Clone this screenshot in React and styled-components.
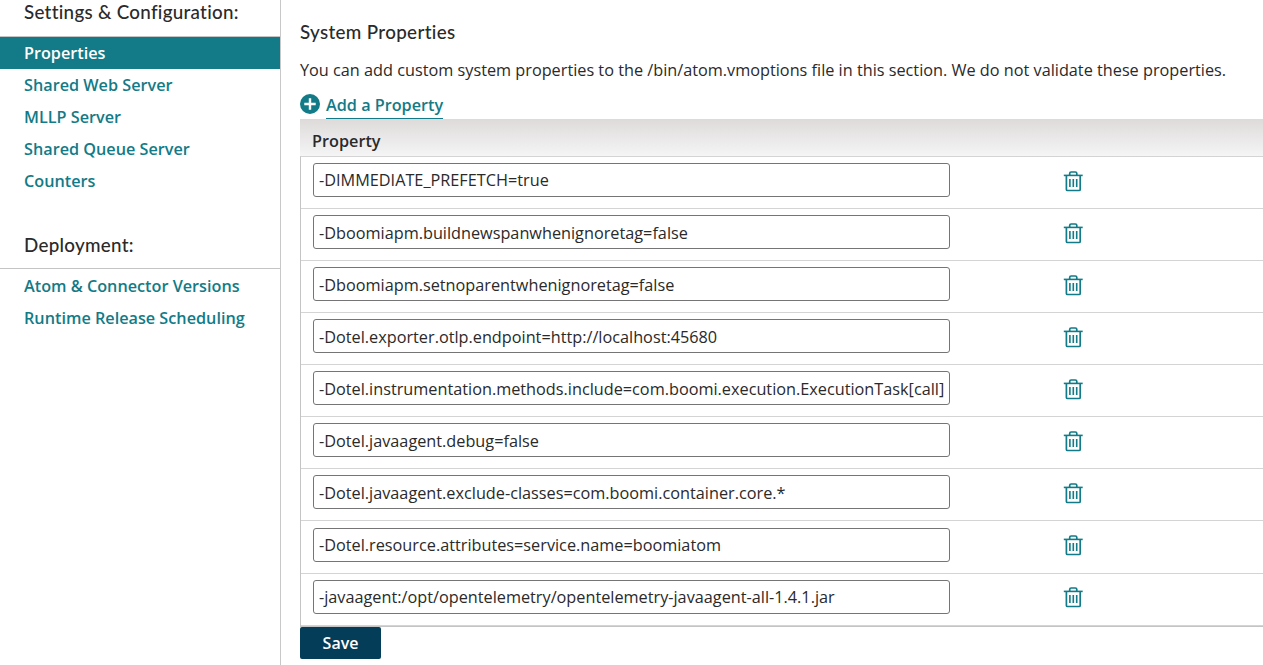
import React from 'react';
import styled, { createGlobalStyle } from 'styled-components';

const teal = '#127b87';

const GlobalStyle = createGlobalStyle`
  * { box-sizing: border-box; }
  html, body { margin: 0; background: #fff; overflow: hidden; }
  body {
    font-family: 'Open Sans', 'Noto Sans', sans-serif;
    font-size: 16.25px;
    line-height: 24px;
    color: #2a2a2a;
  }
`;

const Page = styled.div`
  display: flex;
  width: 100%;
  height: 665px;
  overflow: hidden;
`;

const Sidebar = styled.nav`
  flex: none;
  width: 281px;
  border-right: 1px solid #c9c8c8;
`;

const GroupTitle = styled.h2`
  margin: 0;
  height: ${(p) => p.$height}px;
  padding: 0 0 ${(p) => p.$bottom}px 24px;
  display: flex;
  align-items: flex-end;
  border-bottom: 1px solid #c4c4c4;
  font: 500 18.8px/24px Lato, 'Open Sans', sans-serif;
  letter-spacing: 0.28px;
  white-space: nowrap;
`;

const NavList = styled.ul`
  list-style: none;
  margin: 0;
  padding: ${(p) => p.$top || 0}px 0 0;
`;

const NavItem = styled.li`
  height: 32px;
  padding-left: 24px;
  font-size: 16.23px;
  font-weight: 600;
  line-height: 32px;
  white-space: nowrap;
  color: ${(p) => (p.$active ? '#fff' : teal)};
  background: ${(p) => (p.$active ? teal : 'transparent')};
`;

const Main = styled.main`
  flex: 1;
  min-width: 0;
  padding: 20px 0 0 19px;
`;

const Title = styled.h1`
  margin: 0;
  font: 500 18.8px/24px Lato, 'Open Sans', sans-serif;
  letter-spacing: 0.34px;
`;

const Description = styled.p`
  margin: 14px 0 0;
  white-space: nowrap;
`;

const AddButton = styled.button`
  display: flex;
  align-items: flex-start;
  gap: 6px;
  height: 26px;
  margin: 11px 0 0;
  padding: 0;
  border: 0;
  background: none;
  color: ${teal};
  font: inherit;
  font-size: 16.23px;
  font-weight: 600;
  svg { display: block; margin-top: 1px; }
`;

const AddLabel = styled.span`
  height: 26px;
  line-height: 24px;
  border-bottom: 1px solid ${teal};
`;

const Table = styled.section`
  height: 508px;
  border-bottom: 1px solid #c4c4c4;
`;

const TableHead = styled.div`
  height: 37px;
  padding: 10px 0 0 12px;
  line-height: 24px;
  font-weight: 600;
  background: linear-gradient(#dedada, #f5f5f5);
`;

const TableBody = styled.div`
  border-left: 1px solid #c4c4c4;
  border-top: 1px solid #d4d4d4;
`;

const Row = styled.div`
  display: flex;
  height: 52.07px;
  padding: 6.08px 0 0 12px;
  border-bottom: 1px solid #d4d4d4;
`;

const Field = styled.input`
  flex: none;
  width: 637px;
  height: 34px;
  padding: 0.77px 5px 0;
  border: 1px solid #757575;
  border-radius: 3px;
  background: #fff;
  color: #2a2a2a;
  font: inherit;
  outline: 0;
`;

const DeleteButton = styled.button`
  margin: 7.8px 0 0 113px;
  padding: 0;
  width: 20px;
  height: 21px;
  border: 0;
  background: none;
  color: ${teal};
  svg { display: block; }
`;

const SaveButton = styled.button`
  display: block;
  width: 81px;
  height: 32px;
  padding: 0;
  border: 0;
  border-radius: 2px;
  background: #033d58;
  color: #fff;
  font: inherit;
  font-size: 16px;
  font-weight: 600;
`;

const PlusIcon = () => (
  <svg width="20" height="20" viewBox="0 0 20 20">
    <circle cx="10" cy="10" r="10" fill={teal} />
    <path d="M10 4.3v11.4M4.3 10h11.4" stroke="#fff" strokeWidth="2.4" />
  </svg>
);

const TrashIcon = () => (
  <svg width="20" height="21" viewBox="0 0 20 21" fill="none" stroke="currentColor">
    <path d="M.8 4.4h18.9" strokeWidth="1.6" />
    <path d="M6.7 4.2V2.5Q6.7 1 8.2 1h4.1q1.5 0 1.5 1.5v1.7" strokeWidth="1.7" />
    <path d="M3.4 4.8v13.6q0 1.1 1.1 1.1h11.6q1.1 0 1.1-1.1V4.8" strokeWidth="1.7" />
    <path d="M6.9 7.9v8.2M10.3 7.9v8.2M13.7 7.9v8.2" strokeWidth="1.6" />
  </svg>
);

const settings = ['Properties', 'Shared Web Server', 'MLLP Server', 'Shared Queue Server', 'Counters'];
const deployment = ['Atom & Connector Versions', 'Runtime Release Scheduling'];
const properties = [
  '-DIMMEDIATE_PREFETCH=true',
  '-Dboomiapm.buildnewspanwhenignoretag=false',
  '-Dboomiapm.setnoparentwhenignoretag=false',
  '-Dotel.exporter.otlp.endpoint=http://localhost:45680',
  '-Dotel.instrumentation.methods.include=com.boomi.execution.ExecutionTask[call]',
  '-Dotel.javaagent.debug=false',
  '-Dotel.javaagent.exclude-classes=com.boomi.container.core.*',
  '-Dotel.resource.attributes=service.name=boomiatom',
  '-javaagent:/opt/opentelemetry/opentelemetry-javaagent-all-1.4.1.jar',
];

export default function App() {
  return (
    <>
      <GlobalStyle />
      <Page>
        <Sidebar>
          <GroupTitle $height={37} $bottom={12}>Settings &amp; Configuration:</GroupTitle>
          <NavList>
            {settings.map((item, i) => (
              <NavItem key={item} $active={i === 0}>{item}</NavItem>
            ))}
          </NavList>
          <GroupTitle $height={72} $bottom={11}>Deployment:</GroupTitle>
          <NavList $top={1}>
            {deployment.map((item) => (
              <NavItem key={item}>{item}</NavItem>
            ))}
          </NavList>
        </Sidebar>
        <Main>
          <Title>System Properties</Title>
          <Description>
            You can add custom system properties to the /bin/atom.vmoptions file in this section. We do not validate these properties.
          </Description>
          <AddButton type="button">
            <PlusIcon />
            <AddLabel>Add a Property</AddLabel>
          </AddButton>
          <Table>
            <TableHead>Property</TableHead>
            <TableBody>
              {properties.map((value) => (
                <Row key={value}>
                  <Field type="text" defaultValue={value} aria-label="Property" />
                  <DeleteButton type="button" aria-label="Delete property">
                    <TrashIcon />
                  </DeleteButton>
                </Row>
              ))}
            </TableBody>
          </Table>
          <SaveButton type="button">Save</SaveButton>
        </Main>
      </Page>
    </>
  );
}
